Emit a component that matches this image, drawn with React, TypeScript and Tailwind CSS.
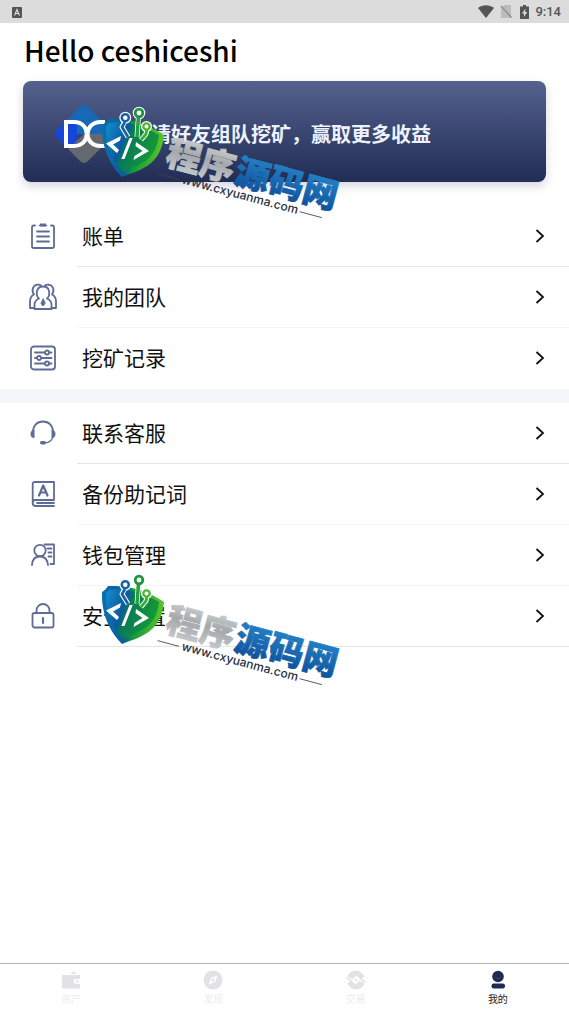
import type { ReactNode } from 'react';

interface MenuItem {
  label: string;
  icon: ReactNode;
  divider: string;
}

interface TabItem {
  label: string;
  icon: ReactNode;
  active?: boolean;
}

const teamItems: MenuItem[] = [
  {
    label: '账单',
    divider: 'border-[#e8e8e8]',
    icon: (
      <>
        <path d="M5 3.500H3.800A1.800 1.800 0 0 0 2 5.300V24.200A1.800 1.800 0 0 0 3.800 26H22.200A1.800 1.800 0 0 0 24 24.200V5.300A1.800 1.800 0 0 0 22.200 3.500H21" />
        <path d="M9.500 3.500h7" strokeWidth="1.600" />
        <path d="M10 1.500h6v3h-6z" fill="currentColor" stroke="none" />
        <path d="M7 9.500h12M7 14.500h12M7 19.500h12" />
      </>
    ),
  },
  {
    label: '我的团队',
    divider: 'border-[#f6f6f6]',
    icon: (
      <>
        <path d="M9 15.500C6.500 13.500 6.500 10.500 7 8c.7-3 3-4.500 6-4.500S18.500 5 19 8c.5 2.500.5 5.500-2 7.500 3 1.500 4.500 3 4.500 6V26h-17v-4.500c0-3 1.500-4.500 4.500-6z" />
        <path d="M11 2.500C9.500 1.200 4.500 1 3 4.800c-.9 2.400-.5 4.700 1 6.700C1 13 0 15.500 0 18.500V25h4.500" />
        <path d="M15 2.500c1.500-1.300 6.500-1.500 8 2.300.9 2.400.5 4.700-1 6.700 3 1.500 4 4 4 7V25h-4.500" />
        <path d="M13 16l-2 4.500 2 2.500 2-2.500z" fill="currentColor" strokeWidth="1" />
      </>
    ),
  },
  {
    label: '挖矿记录',
    divider: 'border-transparent',
    icon: (
      <>
        <rect x="1" y="2.500" width="24" height="23" rx="3" />
        <path d="M5 8.500h10M19 8.500h2.500M5 14h2M11 14h10.500M5 19.500h10M19 19.500h2.500" />
        <circle cx="17" cy="8.500" r="2" />
        <circle cx="9" cy="14" r="2" />
        <circle cx="17" cy="19.500" r="2" />
      </>
    ),
  },
];

const walletItems: MenuItem[] = [
  {
    label: '联系客服',
    divider: 'border-[#e4e4e4]',
    icon: (
      <>
        <path d="M3 13C3 6.500 7 2.500 13 2.500S23 6.500 23 13" />
        <path d="M23 18c-1 3-3.500 5.500-8 6" strokeWidth="1.200" />
        <path d="M4.500 11v8C2 19 .5 17.500.5 15s1.500-4 4-4zM21.500 11v8c2.500 0 4-1.500 4-4s-1.500-4-4-4z" fill="currentColor" stroke="none" />
        <rect x="10" y="22" width="6" height="3.500" rx="1.700" fill="currentColor" stroke="none" />
      </>
    ),
  },
  {
    label: '备份助记词',
    divider: 'border-[#f6f6f6]',
    icon: (
      <>
        <path d="M24 20V2H4.500A1.800 1.800 0 0 0 2.700 3.800V23a3 3 0 0 0 3 3H24M24 20H5.500a2.500 2.500 0 0 0-2.600 3M7 23h17" />
        <path d="M9 15.500L13.200 5.500l4.300 10M10.500 12.500h5.500" strokeWidth="2.200" />
      </>
    ),
  },
  {
    label: '钱包管理',
    divider: 'border-[#f3f3f3]',
    icon: (
      <>
        <circle cx="10" cy="9.500" r="5.700" />
        <path d="M2 24c.3-5 3-8.500 8-8.500s7.500 3.500 8 8.500" />
        <path d="M14.500 3.500H24V23h-3.500M17.500 7.500h4M18.500 11.500h3M18.500 15.500h3" />
      </>
    ),
  },
  {
    label: '安全设置',
    divider: 'border-[#e4e4e4]',
    icon: (
      <>
        <rect x="2.500" y="11" width="21" height="14.500" rx="2" />
        <path d="M6.500 11V8.500a6.500 6.500 0 0 1 13 0V11" />
        <path d="M13 16v5" strokeWidth="2.200" />
      </>
    ),
  },
];

const tabs: TabItem[] = [
  {
    label: '资产',
    icon: (
      <>
        <path d="M1 5h18v4h-4a2.500 2.500 0 0 0 0 5h4v4.500H1zM9 4l4-3 2 3z" />
        <circle cx="16" cy="11.500" r="1.300" />
      </>
    ),
  },
  {
    label: '发现',
    icon: (
      <>
        <circle cx="10" cy="10" r="9.500" />
        <path d="M14.500 5.500L12 12l-6.500 2.500L8 8z" fill="#fff" />
        <circle cx="10" cy="10" r="1.500" />
      </>
    ),
  },
  {
    label: '交易',
    icon: (
      <>
        <path d="M1.500 6.500C4-1 15-1.500 18.500 6.500L15 9.500 10.500 5.500 6.500 9z" />
        <path d="M18.500 13.500C16 21 5 21.500 1.500 13.500L5 10.500l4.500 4 4-3.500z" />
        <path d="M0 8.500h2.500L6 12M20 11.500h-2.500L14 8M8.500 9.500l3 1.500" fill="none" stroke="currentColor" strokeWidth="1.500" />
      </>
    ),
  },
  {
    label: '我的',
    active: true,
    icon: (
      <>
        <circle cx="10" cy="6.500" r="5.800" />
        <rect x="3.500" y="13.500" width="13.500" height="5" rx="2.200" />
        <path d="M7.500 7.500c1.500 1.500 3.500 1.500 5 0" fill="none" stroke="#3c4870" />
      </>
    ),
  },
];

const StatusBar = () => (
  <header className="flex h-[23px] items-center justify-between bg-[#dcdcdc] pl-3 pr-2 text-[#555]">
    <svg className="h-3 w-[10px]" viewBox="0 0 10 12">
      <rect y="1" width="10" height="11" rx="1" fill="#555" />
      <path d="M2.500 9.500L5 3.500l2.500 6M3.500 7.500h3" fill="none" stroke="#ddd" strokeWidth="1.200" />
    </svg>
    <div className="flex items-center">
      <svg className="mr-1.5 h-[13px] w-4" viewBox="0 0 16 13">
        <path d="M0 3C4.500-.8 11.500-.8 16 3L8 13z" fill="currentColor" />
      </svg>
      <svg className="mr-2 h-[13px] w-3" viewBox="0 0 12 13">
        <path d="M4 0h7v13H1V4z" fill="#bcbcbc" />
        <path d="M1 1l10.500 11.500" stroke="#8c8c8c" strokeWidth="1.300" />
      </svg>
      <svg className="mr-1.5 h-[14px] w-[9px]" viewBox="0 0 9 14">
        <path d="M3 0h3v1.500h3V14H0V1.500h3z" fill="currentColor" />
        <path d="M5.500 3.500L2 8.500h2v3.500L7.200 7H5z" fill="#ddd" />
      </svg>
      <span className="font-[Roboto,sans-serif] text-[13px] font-medium leading-4">9:14</span>
    </div>
  </header>
);

const Watermark = ({ id, className }: { id: string; className: string }) => (
  <svg
    className={`pointer-events-none absolute z-10 h-[120px] w-[250px] ${className}`}
    viewBox="0 0 250 120"
    aria-hidden="true"
  >
    <defs>
      <linearGradient id={`${id}-rim`} x1="0" y1="0" x2="1" y2="0">
        <stop offset="0" stopColor="#0b6fae" />
        <stop offset="0.35" stopColor="#0a5e9e" />
        <stop offset="0.5" stopColor="#159a3a" />
        <stop offset="1" stopColor="#5cc52b" />
      </linearGradient>
      <linearGradient id={`${id}-face`} x1="0" y1="0" x2="1" y2="0.35">
        <stop offset="0" stopColor="#128fd0" />
        <stop offset="0.4" stopColor="#0b5aa0" />
        <stop offset="0.5" stopColor="#0a7a58" />
        <stop offset="1" stopColor="#129a34" />
      </linearGradient>
      <linearGradient id={`${id}-silver`} x1="0" y1="0" x2="0" y2="1">
        <stop offset="0" stopColor="#e2e4e5" />
        <stop offset="0.5" stopColor="#a4a8aa" />
        <stop offset="1" stopColor="#cfd1d3" />
      </linearGradient>
      <linearGradient id={`${id}-blue`} x1="0" y1="0" x2="0" y2="1">
        <stop offset="0" stopColor="#2a8fd4" />
        <stop offset="1" stopColor="#0a4a94" />
      </linearGradient>
    </defs>

    {/* Shield */}
    <path
      d="M8 14c8 0 17 0 24 2 10 2 22 7 32 14-1 10-4 20-13 28-8 7-19 10-29 14C11 61 1 43 2 20c2-1 4-3 6-6z"
      fill={`url(#${id}-rim)`}
    />
    <path
      d="M9 18c8-1 16-1 23 1 9 2 18 6 27 11-1 9-4 17-11 24-7 6-17 9-25 13C13 56 5 42 6 22z"
      fill={`url(#${id}-face)`}
    />
    <g fill="none" strokeLinejoin="round">
      <g stroke="#fff" strokeWidth="5">
        <path d="M25 16l-3 6 6 10M38.500 11l-1.500 21M47 24l-1 5-5 6" />
      </g>
      <g fill="#fff">
        <circle cx="25.300" cy="12.700" r="6" />
        <circle cx="39" cy="8" r="6.300" />
        <circle cx="46.500" cy="21.500" r="5.500" />
      </g>
      <path d="M25 17l-3 5 6 10" stroke="#1763a5" strokeWidth="2.800" />
      <path d="M38.500 11l-1.500 21" stroke="#27a03b" strokeWidth="3.500" />
      <path d="M47 24l-1 5-5 6" stroke="#3cae35" strokeWidth="2.800" />
      <circle cx="25.300" cy="12.700" r="3.500" stroke="#1763a5" strokeWidth="2.500" />
      <circle cx="39" cy="8" r="3.800" stroke="#1f9440" strokeWidth="2.800" />
      <circle cx="46.500" cy="21.500" r="3.200" stroke="#4bb62f" strokeWidth="2.300" />
    </g>
    <path
      d="M21 31L6 38.500 17 48l2-3-6-5.500 7-4zM29.500 33h3.200L24.500 54h-3.200zM36 37l13 9-15.500 9 1-4 8-5-7-5z"
      fill="#fff"
    />

    {/* Wordmark */}
    <g transform="translate(64 59) rotate(15)" strokeWidth="0.800">
      <text
        className="font-['Noto_Sans_CJK_SC',sans-serif] text-[35px] font-black"
        fill={`url(#${id}-silver)`}
        stroke={`url(#${id}-silver)`}
      >
        程序
      </text>
      <text
        x="71"
        className="font-['Noto_Sans_CJK_SC',sans-serif] text-[35px] font-black"
        fill={`url(#${id}-blue)`}
        stroke={`url(#${id}-blue)`}
      >
        源码网
      </text>
    </g>
    <g transform="translate(81 78) rotate(15)">
      <text className="font-[Inter,sans-serif] text-[12px] font-medium" fill="#26303f">
        www.cxyuanma.com
      </text>
      <path d="M-25-3h22M122-3h23" stroke="#444" strokeWidth="0.800" />
    </g>
  </svg>
);

const DcLogo = () => (
  <svg className="h-[62px] w-[62px] shrink-0" viewBox="0 0 62 62" aria-hidden="true">
    <defs>
      <clipPath id="dc-diamond">
        <path d="M27 4q4-4 8 0l23 23q4 4 0 8L35 58q-4 4-8 0L4 35q-4-4 0-8z" />
      </clipPath>
    </defs>
    <g clipPath="url(#dc-diamond)">
      <path d="M0 0h62v31H0z" fill="#1769b5" />
      <path d="M0 17h24v28H0z" fill="#1745d8" />
      <path d="M16 45L31 31h31v31H16z" fill="#66686f" />
    </g>
    <g fill="none" stroke="#fff" strokeWidth="4">
      <path d="M13 19h8c17 0 17 24 0 24h-8z" />
      <path d="M52 19h-4c-18 0-18 24 0 24h4" />
    </g>
  </svg>
);

const MenuRow = ({ label, icon, divider }: MenuItem) => (
  <li>
    <a href="#" className="flex h-[61px] items-stretch">
      <span className="flex w-[77px] shrink-0 items-center pb-0.5 pl-[30px] text-[#5f6d94]">
        <svg
          className="h-7 w-[26px] overflow-visible"
          viewBox="0 0 26 28"
          fill="none"
          stroke="currentColor"
          strokeWidth="1.800"
          strokeLinecap="round"
          strokeLinejoin="round"
        >
          {icon}
        </svg>
      </span>
      <span className={`flex flex-1 items-center justify-between border-b pl-[5px] pr-6 ${divider}`}>
        <span className="pb-0.5 text-[21px] leading-8 text-[#111]">{label}</span>
        <svg className="h-4 w-[10px]" viewBox="0 0 10 16" fill="none" stroke="#111" strokeWidth="1.800">
          <path d="M1.500 2L8 8l-6.500 6" />
        </svg>
      </span>
    </a>
  </li>
);

export default function App() {
  return (
    <div className="flex min-h-screen flex-col bg-white font-['Noto_Sans_CJK_SC',sans-serif] text-black">
      <StatusBar />

      <main className="flex-1">
        <h1 className="px-6 pb-3 pt-2 text-[28px] font-medium leading-[38px]">Hello ceshiceshi</h1>

        {/* Invite banner */}
        <div className="relative mx-[23px] mb-6">
          <a
            href="#"
            className="flex h-[101px] items-center rounded-lg bg-gradient-to-b from-[#55628f] to-[#212d54] pl-[30px] pt-1 shadow-[0_4px_10px_rgba(60,60,110,0.22)]"
          >
            <DcLogo />
            <span className="ml-4 whitespace-nowrap text-[20px] font-bold leading-8 text-[#eef2ff]">
              邀请好友组队挖矿，赢取更多收益
            </span>
          </a>
          <Watermark id="banner" className="left-[77px] top-6" />
        </div>

        <ul>
          {teamItems.map((item) => (
            <MenuRow key={item.label} {...item} />
          ))}
        </ul>
        <div className="h-[14px] bg-[#f5f6f9]"></div>
        <div className="relative">
          <ul>
            {walletItems.map((item) => (
              <MenuRow key={item.label} {...item} />
            ))}
          </ul>
          <Watermark id="list" className="left-[100px] top-[169px]" />
        </div>
      </main>

      {/* Bottom tabs */}
      <nav className="grid h-12 grid-cols-4 border-t border-[#b5b5b5]">
        {tabs.map((tab) => (
          <a
            key={tab.label}
            href="#"
            className={`flex flex-col items-center pt-1.5 ${tab.active ? 'text-[#1f2b55]' : 'text-[#e2e2e6]'}`}
          >
            <svg className="h-5 w-5" viewBox="0 0 20 20" fill="currentColor">
              {tab.icon}
            </svg>
            <span className={`text-[10px] leading-[18px] ${tab.active ? 'text-[#222]' : 'text-[#ececef]'}`}>
              {tab.label}
            </span>
          </a>
        ))}
      </nav>
    </div>
  );
}
